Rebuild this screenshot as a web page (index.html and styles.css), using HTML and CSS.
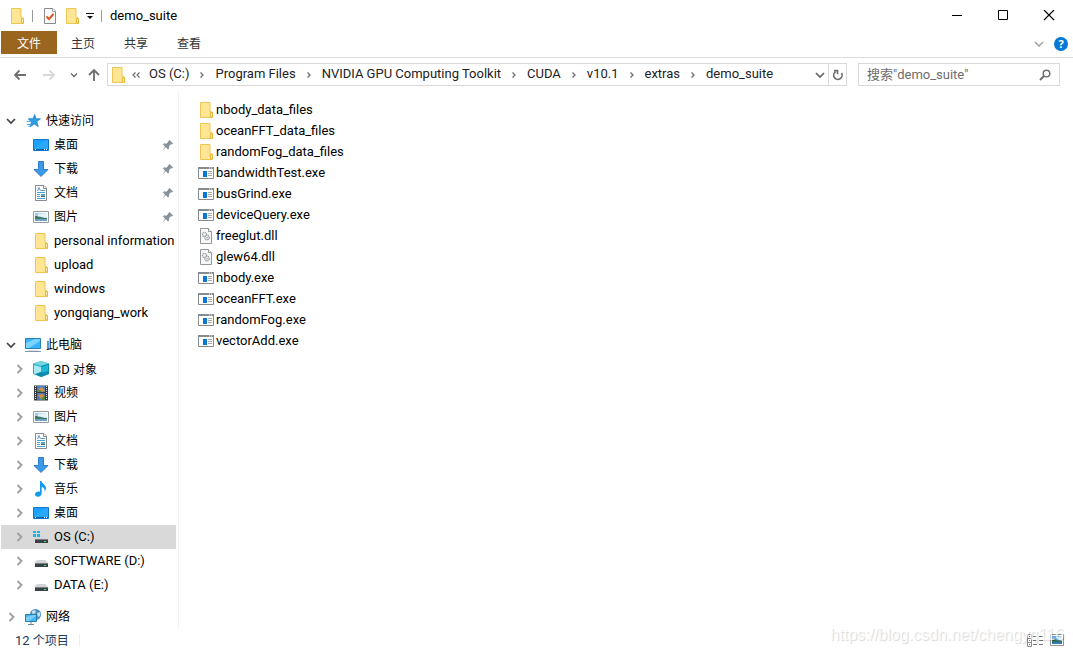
FILE: index.html
```html
<!DOCTYPE html>
<html lang="zh-CN">
<head>
<meta charset="utf-8">
<title>demo_suite</title>
<link rel="stylesheet" href="styles.css">
</head>
<body>
<svg class="sprite" aria-hidden="true">
  <symbol id="folder" viewBox="0 0 16 16">
    <path d="M2.500.5h9.500v8.800l2.500.9v5.300h-12z" fill="#ffe694" stroke="#edc755"/>
    <path d="M12.500 15V10.500h2V15z" fill="#ffeeb0" stroke="#e2b638"/>
  </symbol>
  <symbol id="star" viewBox="0 0 16 16">
    <path d="M9.800 1.500l1.200 4.200 4.500.1-3.600 2.800 1.300 5-4-2.600-4.200 3 1.400-5-3-3 4.300-.2z" fill="#2f9be4" stroke="#1c80cc" stroke-width=".7"/>
    <path d="M3.500 5.500h3M1.500 8.500h4M2 11.500h3M3.500 13.500l2-1" stroke="#4cb2ee" stroke-width="1.100"/>
  </symbol>
  <symbol id="desktop" viewBox="0 0 16 16">
    <path d="M.5 2.500h15v11H.5z" fill="#1ba1fb" stroke="#1079cd"/>
    <path d="M1 11L13 3h2v9H1z" fill="#35adff" opacity=".6"/>
    <path d="M1 12.500h14" stroke="#0a5d9e"/><path d="M2 12.500h1M11 12.500h1M13 12.500h1" stroke="#fff"/>
  </symbol>
  <symbol id="download" viewBox="0 0 16 16">
    <path d="M5.500.5h5v8H15L8 15.500 1 8.500h4.500z" fill="#3c98e8" stroke="#2b7dc9"/>
  </symbol>
  <symbol id="document" viewBox="0 0 16 16">
    <path d="M2.500.5h8.500l2.500 2.500v12.500h-11z" fill="#fff" stroke="#858b90"/>
    <path d="M10.500.5v3h3" fill="#eee" stroke="#858b90"/>
    <path d="M4.500 6l1.500-3.500L7.500 6M8 5.500h4M4 7.500h8M4 9.500h3M4 11.500h3M4 13.500h8" fill="none" stroke="#4a9fd0"/>
    <path d="M8 9h4v3H8z" fill="#6ba2bd"/><path d="M8 11h4v1H8z" fill="#367057"/>
  </symbol>
  <symbol id="picture" viewBox="0 0 16 16">
    <path d="M.5 2.500h15v11H.5z" fill="#fff" stroke="#969a9d"/>
    <path d="M2 4h12v8H2z" fill="#9bcdf3"/><path d="M5 5l9-1v5L5 7z" fill="#e7f4fa"/>
    <path d="M2 7c3 0 6 2 12 2v1H2z" fill="#40775f"/><path d="M2 10h12v2H2z" fill="#6ba3c9"/>
  </symbol>
  <symbol id="pin" viewBox="0 0 12 12">
    <path d="M7.500 1L11 4.500l-1 1-1-.3-2 2 .2 2L6 10.400 3.900 8.300.5 11.500 3 7.800 1 5.500 2.300 4.300l2 .4 2-2L6.300 2z" fill="#87929b"/>
  </symbol>
  <symbol id="pc" viewBox="0 0 16 16">
    <path d="M.5 1.500h15v10H.5z" fill="#39b5fb" stroke="#2580b8"/>
    <path d="M1 11V6l9-4h5v2L4 11z" fill="#7bd3ff"/>
    <path d="M0 14.500h16" stroke="#8098aa"/><path d="M3 13.500h10" stroke="#d4dfe6"/>
  </symbol>
  <symbol id="cube" viewBox="0 0 16 16">
    <path d="M8 0l8 2.500v10.500L8 16 0 13V2.500z" fill="#1baec7"/>
    <path d="M8 0l8 2.500L8 5 0 2.500z" fill="#78d4e4"/><path d="M8 5v11l8-3V2.500z" fill="#0b91b4"/>
    <path d="M1 4l7 2v5l-5 2H1z" fill="#a9e9f1"/><path d="M8 6l7-2v6l-7 2z" fill="#1eb8d4"/>
    <path d="M8 11l6 2-6 3-6-3z" fill="#128aa6"/>
  </symbol>
  <symbol id="video" viewBox="0 0 16 16">
    <path d="M1 .5h14v15H1z" fill="#343a40"/><path d="M4 1h8v6H4z" fill="#4d80c8"/><path d="M4 8h8v7H4z" fill="#5076bd"/>
    <path d="M5 5l3-3 3 2 1 2-4 1zM5 10l4-1 3 2-2 1-1 3-2-2z" fill="#d89038"/>
    <path d="M4 6l3-1 2 2H4zM8 13l4-2v4H9z" fill="#4b8741"/>
    <path d="M2.500 1v14M13.500 1v14" stroke="#e2e4e6" stroke-dasharray="1 1"/>
  </symbol>
  <symbol id="music" viewBox="0 0 16 16">
    <path d="M7 0h1.500c.3 2.500 4.500 3.500 4.500 7 0 1.500-.6 2.500-1.500 3.500.5-2.500-.8-4-2.800-4.700V12c0 2.200-1.700 3.700-3.900 3.700-1.600 0-2.800-.9-2.800-2.200C2 11.500 4.500 10 7 10.700z" fill="#129bee"/>
  </symbol>
  <symbol id="drive" viewBox="0 0 16 16">
    <path d="M4 7h8l3 3H1z" fill="#d3d5d7"/><path d="M2 10h13v4H2z" fill="#3c4146"/>
    <path d="M2 10h13v1H2z" fill="#777c80"/><path d="M11 12h2v1h-2z" fill="#38e36b"/>
  </symbol>
  <symbol id="windrive" viewBox="0 0 16 16">
    <use href="#drive"/><path d="M0 1h7v7H0z" fill="#d9d9d9"/>
    <path d="M0 2h3v2H0zM4 2h3v2H4zM0 5h3v3H0zM4 5h3v3H4z" fill="#13b5ef"/>
  </symbol>
  <symbol id="network" viewBox="0 0 16 16">
    <circle cx="10.500" cy="5.500" r="5.500" fill="#4c8ebd"/>
    <path d="M7 2l3-1 1 2-2 2-2-.5zM12 4l3-1v4l-2 1z" fill="#c5e0ed"/>
    <path d="M.5 5.500h11v7H.5z" fill="#47b5f2" stroke="#297fae"/>
    <path d="M1 11V8l7-2h3v1l-7 5H1z" fill="#79cdf8"/><path d="M6 13v2M3 15.500h6" stroke="#65899f"/>
  </symbol>
  <symbol id="exe" viewBox="0 0 16 16">
    <path d="M.5 2.500h15v11H.5z" fill="#fff" stroke="#858b90"/>
    <path d="M0 2h16v2H0z" fill="#858b90"/><path d="M11 3h1M13 3h1" stroke="#fff"/>
    <path d="M5 6h4v6H5z" fill="#0878d7"/><path d="M10 6.500h4M10 8.500h4M10 10.500h4" stroke="#a5a9ac"/>
  </symbol>
  <symbol id="dll" viewBox="0 0 16 16">
    <path d="M2.500.5h8l3 3v12h-11z" fill="#f9f9f9" stroke="#92979a"/><path d="M10.500.5v3h3" fill="#fff" stroke="#92979a"/>
    <circle cx="6.500" cy="6.500" r="2" fill="#fff" stroke="#9a9fa3" stroke-width="1.400" stroke-dasharray="1.200 .5"/>
    <circle cx="9" cy="9.500" r="2.200" fill="#fff" stroke="#9a9fa3" stroke-width="1.500" stroke-dasharray="1.200 .5"/>
    <circle cx="9" cy="9.500" r=".8" fill="#9a9ea1"/>
  </symbol>
  <symbol id="right" viewBox="0 0 10 10"><path d="M3.500 1L7.500 5l-4 4" fill="none" stroke="#a0a0a0" stroke-width="1.800"/></symbol>
  <symbol id="down" viewBox="0 0 10 8"><path d="M1 2l4 4 4-4" fill="none" stroke="currentColor" stroke-width="1.700"/></symbol>
  <symbol id="sep" viewBox="0 0 6 8"><path d="M1.500 1.500L4 4 1.500 6.500" fill="none" stroke="#6e6e6e" stroke-width="1.300"/></symbol>
</svg>

<div class="window">
  <header class="titlebar">
    <svg class="icon"><use href="#folder"/></svg>
    <span class="bar"></span>
    <button class="plain props" aria-label="属性"><svg class="icon" viewBox="0 0 16 16"><path d="M2.500.5h8.500l2.500 2.500v12.500h-11z" fill="#fafafa" stroke="#858b90"/><path d="M10.500.5v3h3" fill="#fff" stroke="#a3a7aa"/><path d="M4.500 8.500l2.500 2.500 4.500-5" fill="none" stroke="#e0531f" stroke-width="1.900"/></svg></button>
    <button class="plain newfolder" aria-label="新建文件夹"><svg class="icon"><use href="#folder"/></svg></button>
    <button class="plain customize" aria-label="自定义"><svg width="8" height="8" viewBox="0 0 8 8"><path d="M0 1.500h8" stroke="#111"/><path d="M1 4h6L4 7z" fill="#111"/></svg></button>
    <span class="bar"></span>
    <h1 class="title">demo_suite</h1>
    <div class="controls">
      <button class="plain control" aria-label="最小化"><svg width="12" height="12" viewBox="0 0 12 12"><path d="M1 5.500h10" stroke="#000"/></svg></button>
      <button class="plain control" aria-label="最大化"><svg width="12" height="12" viewBox="0 0 12 12"><path d="M1.500 .5h9v9h-9z" fill="none" stroke="#000"/></svg></button>
      <button class="plain control" aria-label="关闭"><svg width="12" height="12" viewBox="0 0 12 12"><path d="M1 0l10 10M11 0L1 10" stroke="#000" stroke-width="1.200"/></svg></button>
    </div>
  </header>

  <nav class="ribbon">
    <button class="tab tab-file">文件</button>
    <button class="tab">主页</button>
    <button class="tab">共享</button>
    <button class="tab">查看</button>
    <div class="ribbon-end">
      <button class="plain faint" aria-label="展开功能区"><svg class="chev-down"><use href="#down"/></svg></button>
      <button class="help" aria-label="帮助">?</button>
    </div>
  </nav>

  <div class="toolbar">
    <div class="history">
      <button class="plain" aria-label="后退"><svg width="14" height="12" viewBox="0 0 14 12"><path d="M13 6H2M6.500 1.500L2 6l4.500 4.500" fill="none" stroke="#707070" stroke-width="1.800"/></svg></button>
      <button class="plain" aria-label="前进"><svg width="14" height="12" viewBox="0 0 14 12"><path d="M1 6h11M7.500 1.500L12 6l-4.500 4.500" fill="none" stroke="#d8d8d8" stroke-width="1.800"/></svg></button>
      <button class="plain recent" aria-label="最近位置"><svg width="8" height="6" viewBox="0 0 10 8"><use href="#down"/></svg></button>
      <button class="plain" aria-label="上移"><svg width="12" height="14" viewBox="0 0 12 14"><path d="M6 13V2M1 7l5-5 5 5" fill="none" stroke="#707070" stroke-width="1.900"/></svg></button>
    </div>
    <div class="address">
      <svg class="icon"><use href="#folder"/></svg>
      <span class="more"><svg width="8" height="8" viewBox="0 0 8 8"><path d="M3.500 1.500L1 4l2.500 2.500M7.500 1.500L5 4l2.500 2.500" fill="none" stroke="#666" stroke-width="1.100"/></svg></span>
      <a class="crumb" href="#">OS (C:)</a><svg class="sep"><use href="#sep"/></svg>
      <a class="crumb" href="#">Program Files</a><svg class="sep"><use href="#sep"/></svg>
      <a class="crumb" href="#">NVIDIA GPU Computing Toolkit</a><svg class="sep"><use href="#sep"/></svg>
      <a class="crumb" href="#">CUDA</a><svg class="sep"><use href="#sep"/></svg>
      <a class="crumb" href="#">v10.1</a><svg class="sep"><use href="#sep"/></svg>
      <a class="crumb" href="#">extras</a><svg class="sep"><use href="#sep"/></svg>
      <a class="crumb" href="#">demo_suite</a>
      <button class="plain dropdown" aria-label="以前的位置"><svg class="chev-down"><use href="#down"/></svg></button>
      <button class="plain refresh" aria-label="刷新"><svg width="12" height="12" viewBox="0 0 12 12"><path d="M3.500 2.700A4.200 4.200 0 1 0 9.500 4M2 1.700h3.500v3.600" fill="none" stroke="#707070" stroke-width="1.700"/></svg></button>
    </div>
    <label class="search">
      <input class="search-input" type="text" placeholder="搜索&quot;demo_suite&quot;" aria-label="搜索">
      <svg width="12" height="12" viewBox="0 0 12 12"><circle cx="7.500" cy="4.500" r="3.300" fill="none" stroke="#707070" stroke-width="1.500"/><path d="M5.200 6.800L1 11" stroke="#707070" stroke-width="2"/></svg>
    </label>
  </div>

  <div class="body">
    <aside class="tree">
      <div class="group">
        <a class="row root" href="#"><svg class="twist open"><use href="#down"/></svg><svg class="icon"><use href="#star"/></svg><span class="zh">快速访问</span></a>
        <a class="row" href="#"><svg class="icon"><use href="#desktop"/></svg><span class="zh">桌面</span><svg class="pin"><use href="#pin"/></svg></a>
        <a class="row" href="#"><svg class="icon"><use href="#download"/></svg><span class="zh">下载</span><svg class="pin"><use href="#pin"/></svg></a>
        <a class="row" href="#"><svg class="icon"><use href="#document"/></svg><span class="zh">文档</span><svg class="pin"><use href="#pin"/></svg></a>
        <a class="row" href="#"><svg class="icon"><use href="#picture"/></svg><span class="zh">图片</span><svg class="pin"><use href="#pin"/></svg></a>
        <a class="row" href="#"><svg class="icon"><use href="#folder"/></svg><span>personal information</span></a>
        <a class="row" href="#"><svg class="icon"><use href="#folder"/></svg><span>upload</span></a>
        <a class="row" href="#"><svg class="icon"><use href="#folder"/></svg><span>windows</span></a>
        <a class="row" href="#"><svg class="icon"><use href="#folder"/></svg><span>yongqiang_work</span></a>
      </div>
      <div class="group">
        <a class="row root" href="#"><svg class="twist open"><use href="#down"/></svg><svg class="icon"><use href="#pc"/></svg><span class="zh">此电脑</span></a>
        <a class="row child" href="#"><svg class="twist"><use href="#right"/></svg><svg class="icon"><use href="#cube"/></svg><span>3D <span class="zh">对象</span></span></a>
        <a class="row child" href="#"><svg class="twist"><use href="#right"/></svg><svg class="icon"><use href="#video"/></svg><span class="zh">视频</span></a>
        <a class="row child" href="#"><svg class="twist"><use href="#right"/></svg><svg class="icon"><use href="#picture"/></svg><span class="zh">图片</span></a>
        <a class="row child" href="#"><svg class="twist"><use href="#right"/></svg><svg class="icon"><use href="#document"/></svg><span class="zh">文档</span></a>
        <a class="row child" href="#"><svg class="twist"><use href="#right"/></svg><svg class="icon"><use href="#download"/></svg><span class="zh">下载</span></a>
        <a class="row child" href="#"><svg class="twist"><use href="#right"/></svg><svg class="icon"><use href="#music"/></svg><span class="zh">音乐</span></a>
        <a class="row child" href="#"><svg class="twist"><use href="#right"/></svg><svg class="icon"><use href="#desktop"/></svg><span class="zh">桌面</span></a>
        <a class="row child selected" href="#"><svg class="twist"><use href="#right"/></svg><svg class="icon"><use href="#windrive"/></svg><span>OS (C:)</span></a>
        <a class="row child" href="#"><svg class="twist"><use href="#right"/></svg><svg class="icon"><use href="#drive"/></svg><span>SOFTWARE (D:)</span></a>
        <a class="row child" href="#"><svg class="twist"><use href="#right"/></svg><svg class="icon"><use href="#drive"/></svg><span>DATA (E:)</span></a>
      </div>
      <div class="group">
        <a class="row root" href="#"><svg class="twist"><use href="#right"/></svg><svg class="icon"><use href="#network"/></svg><span class="zh">网络</span></a>
      </div>
    </aside>
    <main class="files">
      <a class="file" href="#"><svg class="icon"><use href="#folder"/></svg>nbody_data_files</a>
      <a class="file" href="#"><svg class="icon"><use href="#folder"/></svg>oceanFFT_data_files</a>
      <a class="file" href="#"><svg class="icon"><use href="#folder"/></svg>randomFog_data_files</a>
      <a class="file" href="#"><svg class="icon"><use href="#exe"/></svg>bandwidthTest.exe</a>
      <a class="file" href="#"><svg class="icon"><use href="#exe"/></svg>busGrind.exe</a>
      <a class="file" href="#"><svg class="icon"><use href="#exe"/></svg>deviceQuery.exe</a>
      <a class="file" href="#"><svg class="icon"><use href="#dll"/></svg>freeglut.dll</a>
      <a class="file" href="#"><svg class="icon"><use href="#dll"/></svg>glew64.dll</a>
      <a class="file" href="#"><svg class="icon"><use href="#exe"/></svg>nbody.exe</a>
      <a class="file" href="#"><svg class="icon"><use href="#exe"/></svg>oceanFFT.exe</a>
      <a class="file" href="#"><svg class="icon"><use href="#exe"/></svg>randomFog.exe</a>
      <a class="file" href="#"><svg class="icon"><use href="#exe"/></svg>vectorAdd.exe</a>
    </main>
  </div>

  <footer class="status">
    <span class="count">12 <span class="zh">个项目</span></span>
    <span class="status-bar"></span>
    <div class="views">
      <button class="plain" aria-label="详细信息"><svg width="16" height="14" viewBox="0 0 16 14"><path d="M.5 1.500h4v12h-4zM.5 5.500h4M.5 9.500h4" fill="#fff" stroke="#8c8c8c"/><path d="M2 3.500h1M2 7.500h1" stroke="#3686c4"/><path d="M2 11.500h1" stroke="#d43b3b"/><path d="M6 3.500h4M12 3.500h4M6 7.500h4M12 7.500h4M6 11.500h4M12 11.500h4" stroke="#777"/></svg></button>
      <button class="plain" aria-label="大图标"><svg width="14" height="12" viewBox="0 0 14 12"><path d="M.5.5h13v11H.5z" fill="#fff" stroke="#8e959b"/><path d="M2 2h10v8H2z" fill="#69aeea"/><path d="M6 3l6-1v5z" fill="#d6eafa"/><path d="M2 5c4 0 6 2 10 2v1H2z" fill="#356c5c"/><path d="M2 8h10v2H2z" fill="#347bad"/></svg></button>
    </div>
    <span class="watermark">https://blog.csdn.net/chengyq116</span>
  </footer>
</div>
</body>
</html>
```
FILE: styles.css
```css
* { box-sizing: border-box; }
body {
  margin: 0;
  background: #fff;
  color: #000;
  font: 13px/20px Roboto, "Noto Sans CJK SC", sans-serif;
}
a { color: inherit; text-decoration: none; }
svg { display: block; flex: none; }
.sprite { position: absolute; width: 0; height: 0; }
.zh { font-family: "Noto Sans CJK SC", sans-serif; font-size: 12px; }
.icon { width: 16px; height: 16px; }
.plain {
  display: flex;
  align-items: center;
  justify-content: center;
  padding: 0;
  border: 0;
  background: none;
  color: #666;
}
.window { display: flex; flex-direction: column; min-height: 100vh; }

.titlebar { display: flex; align-items: center; height: 31px; padding-left: 9px; }
.bar { width: 1px; height: 12px; background: #999; }
.titlebar > .icon + .bar { margin-left: 7px; }
.props { margin-left: 9px; }
.newfolder { margin-left: 6px; }
.customize { margin: 0 7px 0 6px; }
.title { margin: 0 0 0 8px; font-size: 13px; font-weight: 400; }
.controls { display: flex; margin-left: auto; padding-right: 1px; }
.control { width: 46px; height: 30px; }

.ribbon {
  display: flex;
  gap: 1px;
  height: 27px;
  padding-left: 1px;
  border-bottom: 1px solid #dadbdc;
}
.tab {
  height: 23px;
  padding: 0 14px;
  border: 0;
  background: none;
  color: #333;
  font: 12px/20px "Noto Sans CJK SC", sans-serif;
}
.tab-file { padding: 0 16px; margin-right: -1px; background: #99651f; color: #fff; }
.ribbon-end { display: flex; align-items: center; gap: 10px; margin-left: auto; padding-right: 5px; }
.chev-down { width: 10px; height: 8px; }
.faint { color: #a8a8a8; }
.help {
  width: 14px;
  height: 14px;
  padding: 0;
  border: 0;
  border-radius: 50%;
  background: #0878d7;
  color: #fff;
  font: bold 11px/14px "Noto Sans", sans-serif;
}

.toolbar { display: flex; align-items: center; height: 33px; padding-right: 13px; }
.history { display: flex; align-items: center; gap: 15px; width: 107px; padding-left: 13px; }
.recent { margin: 0 -5px 0 -1px; }
.address, .search { display: flex; align-items: center; height: 23px; border: 1px solid #d9d9d9; }
.address { flex: 1; padding-left: 2px; color: #222; }
.more { margin: 0 9px 0 6px; }
.crumb { padding-bottom: 1px; white-space: nowrap; }
.sep { width: 6px; height: 8px; margin: 0 10px; }
.dropdown { width: 16px; height: 21px; margin-left: auto; }
.refresh { width: 18px; height: 21px; border-left: 1px solid #d9d9d9; }
.search { width: 202px; margin-left: 11px; padding: 0 8px; }
.search-input {
  flex: 1;
  min-width: 0;
  padding: 0;
  border: 0;
  outline: 0;
  font: 13px/20px Roboto, "Noto Sans CJK SC", sans-serif;
}
.search-input::placeholder { color: #6d6d6d; opacity: 1; }

.body { display: flex; flex: 1; }
.tree {
  display: flex;
  flex-direction: column;
  gap: 8px;
  width: 179px;
  padding: 18px 2px 0 1px;
  border-right: 1px solid #f3f3f3;
}
.row {
  display: flex;
  align-items: center;
  gap: 5px;
  height: 24px;
  padding-left: 32px;
  white-space: nowrap;
}
.row > .zh { padding-bottom: 2px; }
.root { padding-left: 5px; }
.child { padding-left: 13px; }
.selected { background: #d9d9d9; }
.twist { width: 10px; height: 10px; }
.child .twist { margin-right: 4px; }
.root .twist { margin-right: 4px; }
.open { color: #404040; }
.pin { width: 12px; height: 12px; margin: 0 2px 0 auto; }
.files { flex: 1; padding: 8px 19px; }
.file { display: flex; align-items: center; gap: 2px; height: 21px; }

.status {
  position: relative;
  display: flex;
  align-items: center;
  height: 24px;
  padding: 0 9px 2px 15px;
  color: #1e395b;
}
.status-bar { width: 1px; height: 12px; margin-left: 10px; background: #eee; }
.views { display: flex; gap: 7px; margin-left: auto; }
.watermark {
  position: absolute;
  right: 9px;
  bottom: 8px;
  color: rgba(255, 255, 255, .8);
  font: 16px/20px "Liberation Sans", sans-serif;
  text-shadow: 1px 1px 1px rgba(0, 0, 0, .16);
  pointer-events: none;
}
```
